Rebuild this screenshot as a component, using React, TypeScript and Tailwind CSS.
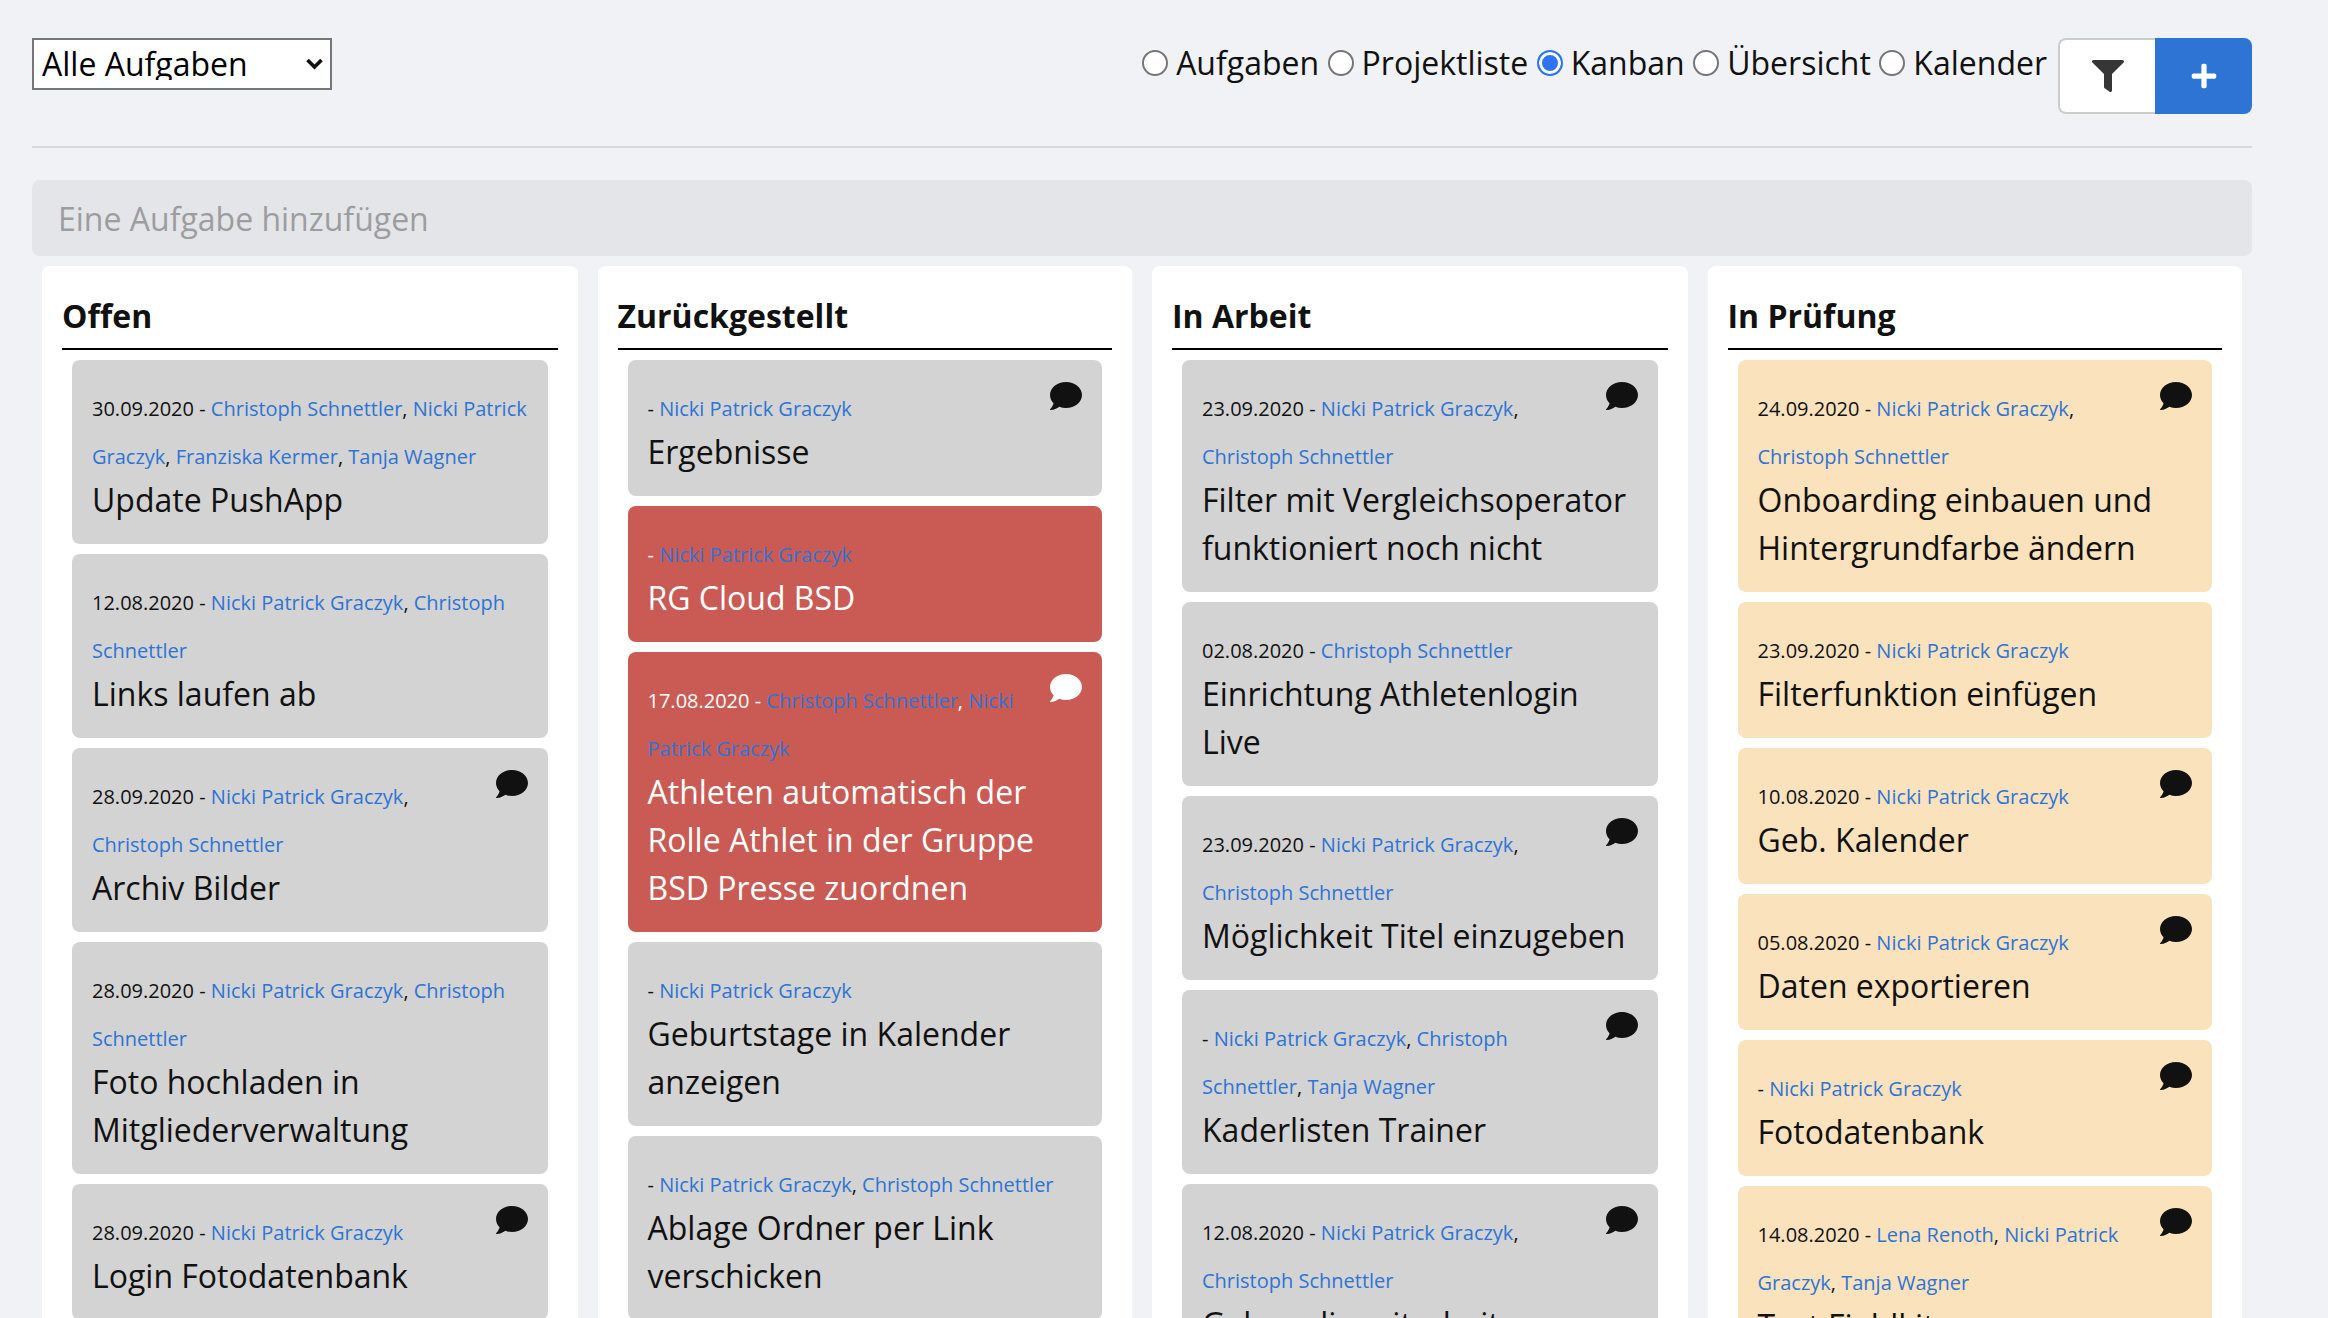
import { FaComment, FaFilter, FaPlus } from "react-icons/fa"

type Task = {
  date?: string
  people: string[]
  title: string
  comment?: boolean
  red?: boolean
}

const NP = "Nicki Patrick Graczyk"
const CS = "Christoph Schnettler"
const TW = "Tanja Wagner"

const columns: { name: string; done?: boolean; tasks: Task[] }[] = [
  {
    name: "Offen",
    tasks: [
      { date: "30.09.2020", people: [CS, NP, "Franziska Kermer", TW], title: "Update PushApp" },
      { date: "12.08.2020", people: [NP, CS], title: "Links laufen ab" },
      { date: "28.09.2020", people: [NP, CS], title: "Archiv Bilder", comment: true },
      { date: "28.09.2020", people: [NP, CS], title: "Foto hochladen in Mitgliederverwaltung" },
      { date: "28.09.2020", people: [NP], title: "Login Fotodatenbank", comment: true },
    ],
  },
  {
    name: "Zurückgestellt",
    tasks: [
      { people: [NP], title: "Ergebnisse", comment: true },
      { people: [NP], title: "RG Cloud BSD", red: true },
      {
        date: "17.08.2020",
        people: [CS, NP],
        title: "Athleten automatisch der Rolle Athlet in der Gruppe BSD Presse zuordnen",
        comment: true,
        red: true,
      },
      { people: [NP], title: "Geburtstage in Kalender anzeigen" },
      { people: [NP, CS], title: "Ablage Ordner per Link verschicken" },
    ],
  },
  {
    name: "In Arbeit",
    tasks: [
      { date: "23.09.2020", people: [NP, CS], title: "Filter mit Vergleichsoperator funktioniert noch nicht", comment: true },
      { date: "02.08.2020", people: [CS], title: "Einrichtung Athletenlogin Live" },
      { date: "23.09.2020", people: [NP, CS], title: "Möglichkeit Titel einzugeben", comment: true },
      { people: [NP, CS, TW], title: "Kaderlisten Trainer", comment: true },
      { date: "12.08.2020", people: [NP, CS], title: "Gehen die mitarbeit", comment: true },
    ],
  },
  {
    name: "In Prüfung",
    done: true,
    tasks: [
      { date: "24.09.2020", people: [NP, CS], title: "Onboarding einbauen und Hintergrundfarbe ändern", comment: true },
      { date: "23.09.2020", people: [NP], title: "Filterfunktion einfügen" },
      { date: "10.08.2020", people: [NP], title: "Geb. Kalender", comment: true },
      { date: "05.08.2020", people: [NP], title: "Daten exportieren", comment: true },
      { people: [NP], title: "Fotodatenbank", comment: true },
      { date: "14.08.2020", people: ["Lena Renoth", NP, TW], title: "Test Fieldkit", comment: true },
    ],
  },
]

const views = ["Aufgaben", "Projektliste", "Kanban", "Übersicht", "Kalender"]

const TaskCard = ({ task, done }: { task: Task; done?: boolean }) => {
  const bg = task.red ? "bg-[#c95b54] text-white" : done ? "bg-[#fae2bd]" : "bg-[#d3d3d3]"

  return (
    <div className={`mb-[10px] rounded-lg p-5 text-[32px] leading-[48px] ${bg}`}>
      {task.comment && <FaComment className="float-right h-8 w-8" />}
      <div>
        <span className="text-[20px] leading-[30px]">
          {task.date} -{" "}
          {task.people.map((person, i) => (
            <span key={person}>
              <a className="text-[#2e74d4]">{person}</a>
              {i < task.people.length - 1 && ", "}
            </span>
          ))}
        </span>
      </div>
      <div>{task.title}</div>
    </div>
  )
}

const App = () => {
  return (
    <div className="h-screen overflow-hidden bg-[#f0f2f6] pl-8 pr-[76px] pt-[38px] font-['Open_Sans',sans-serif] text-[#111]">
      {/*HEADER*/}
      <div className="flex items-start justify-between">
        <div className="relative">
          <select className="block h-[52px] w-[300px] appearance-none rounded-none border-2 border-[#767676] bg-white pl-2 text-[32px] leading-none text-black">
            <option>Alle Aufgaben</option>
          </select>
          <svg
            viewBox="0 0 19 12"
            className="pointer-events-none absolute right-[8px] top-[20px] h-[12px] w-[19px]"
          >
            <path d="M2.5 2 L9.5 9 L16.5 2" fill="none" stroke="#111" strokeWidth="3.6" />
          </svg>
        </div>
        <div className="flex">
          <div className="flex items-start pt-[1px] text-[32px] leading-[48px]">
            {views.map((view) => (
              <label key={view} className="ml-[8.5px] flex items-center">
                <input
                  type="radio"
                  name="view"
                  defaultChecked={view === "Kanban"}
                  className="mr-[8px] h-[26px] w-[26px] appearance-none rounded-full border-2 border-[#767676] bg-white checked:border-[#2f73f0] checked:bg-[#2f73f0] checked:shadow-[inset_0_0_0_3px_white]"
                />
                {view}
              </label>
            ))}
          </div>
          <div className="ml-[11px] flex h-[76px]">
            <button className="flex w-[97px] items-center justify-center rounded-l-lg border-2 border-r-0 border-[#ccc] bg-white text-[#363636]">
              <FaFilter className="h-8 w-8" />
            </button>
            <button className="flex w-[97px] items-center justify-center rounded-r-lg bg-[#2e74d4] text-white">
              <FaPlus className="h-7 w-7" />
            </button>
          </div>
        </div>
      </div>

      <hr className="mt-[32px] border-t-2 border-[#d8d9dd]" />

      {/*ADD TASK*/}
      <input
        placeholder="Eine Aufgabe hinzufügen"
        className="mt-[32px] block h-[76px] w-full rounded-lg bg-[#e4e5e9] px-[26px] text-[32px] placeholder:text-[#9d9d9f]"
      />

      {/*BOARD*/}
      <div className="mt-[10px] grid grid-cols-[555.5px_554.5px_555.5px_554.5px]">
        {columns.map((column) => (
          <div key={column.name} className="px-[10px]">
            <div className="rounded-lg bg-white px-5 pt-[26px] pb-5">
              <h2 className="border-b-2 border-black pb-2 text-[32px] font-bold leading-[48px]">
                {column.name}
              </h2>
              <div className="mt-[10px] px-[10px]">
                {column.tasks.map((task) => (
                  <TaskCard key={task.title} task={task} done={column.done} />
                ))}
              </div>
            </div>
          </div>
        ))}
      </div>
    </div>
  )
}

export default App
